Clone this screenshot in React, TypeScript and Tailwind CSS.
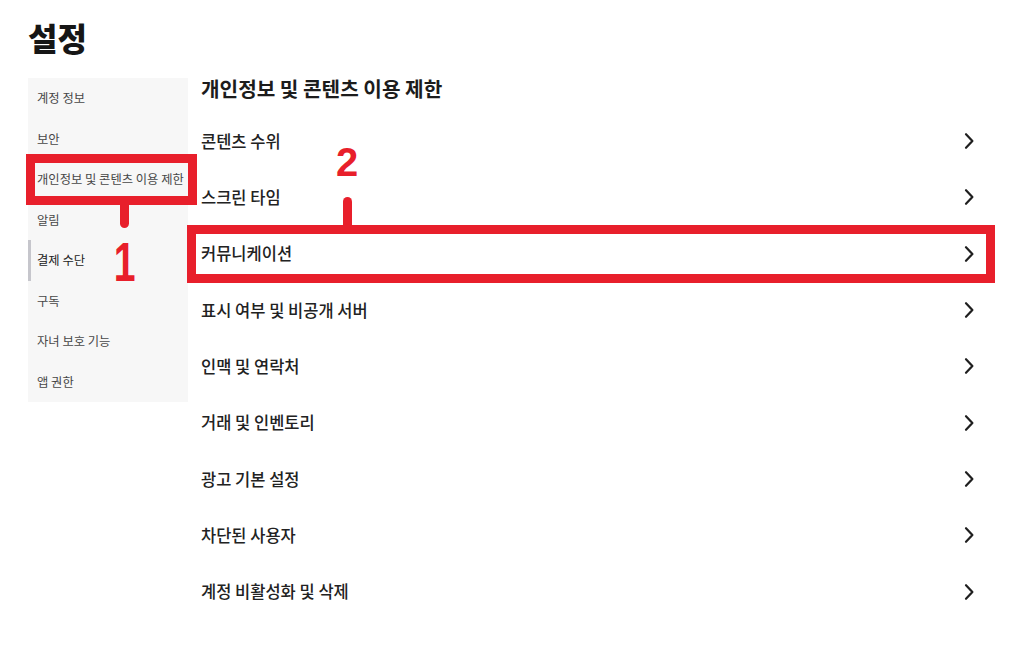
import React from "react";

const sideItems = [
  "계정 정보",
  "보안",
  "개인정보 및 콘텐츠 이용 제한",
  "알림",
  "결제 수단",
  "구독",
  "자녀 보호 기능",
  "앱 권한",
];

const rows = [
  "콘텐츠 수위",
  "스크린 타임",
  "커뮤니케이션",
  "표시 여부 및 비공개 서버",
  "인맥 및 연락처",
  "거래 및 인벤토리",
  "광고 기본 설정",
  "차단된 사용자",
  "계정 비활성화 및 삭제",
];

function Chevron() {
  return (
    <svg width="12" height="18" viewBox="0 0 12 18" fill="none">
      <polyline
        points="3,2.2 9.4,9 3,15.8"
        stroke="#1f1f1f"
        strokeWidth="2.2"
        strokeLinecap="round"
        strokeLinejoin="round"
      />
    </svg>
  );
}

export default function App() {
  return (
    <div
      className="relative w-[1033px] h-[653px] bg-white overflow-hidden"
      style={{ fontFamily: '"Noto Sans CJK KR", "Noto Sans", sans-serif' }}
    >
      <div className="pl-[28px] pt-[19px]">
        <h1 className="text-[32px] leading-[36px] font-black text-[#161616]">설정</h1>
        <div className="flex items-start mt-[23px]">
          <div className="w-[160px] bg-[#f7f7f7] flex flex-col">
            {sideItems.map((t, i) => (
              <div
                key={t}
                className={
                  i === 4
                    ? "h-[40.5px] flex items-center pl-[6px] border-l-[3px] border-[#c6c6cc] text-[12.3px] text-[#222]"
                    : "h-[40.5px] flex items-center pl-[9px] text-[12.3px] text-[#474747]"
                }
              >
                {t}
              </div>
            ))}
          </div>
          <div className="w-[797px] pl-[13px] pr-[10px]">
            <h2 className="text-[20.2px] leading-[22px] font-bold text-[#1c1c1c] mb-[13px]">
              개인정보 및 콘텐츠 이용 제한
            </h2>
            {rows.map((t) => (
              <div key={t} className="h-[56.3px] flex items-center justify-between">
                <span className="text-[16.5px] font-medium text-[#222]">{t}</span>
                <Chevron />
              </div>
            ))}
          </div>
        </div>
      </div>

      {/* annotation 1 */}
      <div className="absolute left-[26px] top-[154px] w-[171px] h-[51px] border-[9px] border-[#e81f2b]" />
      <div className="absolute left-[120px] top-[204px] w-[9px] h-[24px] bg-[#e81f2b] rounded-b-full" />
      <div
        className="absolute left-[109px] top-[234px] text-[56px] leading-none font-bold text-[#e81f2b] scale-x-[0.7]"
        style={{ fontFamily: '"Liberation Sans", sans-serif' }}
      >
        1
      </div>

      {/* annotation 2 */}
      <div className="absolute left-[187px] top-[225px] w-[808px] h-[58px] border-[9px] border-[#e81f2b]" />
      <div className="absolute left-[343px] top-[197px] w-[9px] h-[29px] bg-[#e81f2b] rounded-t-full" />
      <div
        className="absolute left-[336px] top-[142px] text-[40px] leading-none font-bold text-[#e81f2b]"
        style={{ fontFamily: '"Liberation Sans", sans-serif' }}
      >
        2
      </div>
    </div>
  );
}
